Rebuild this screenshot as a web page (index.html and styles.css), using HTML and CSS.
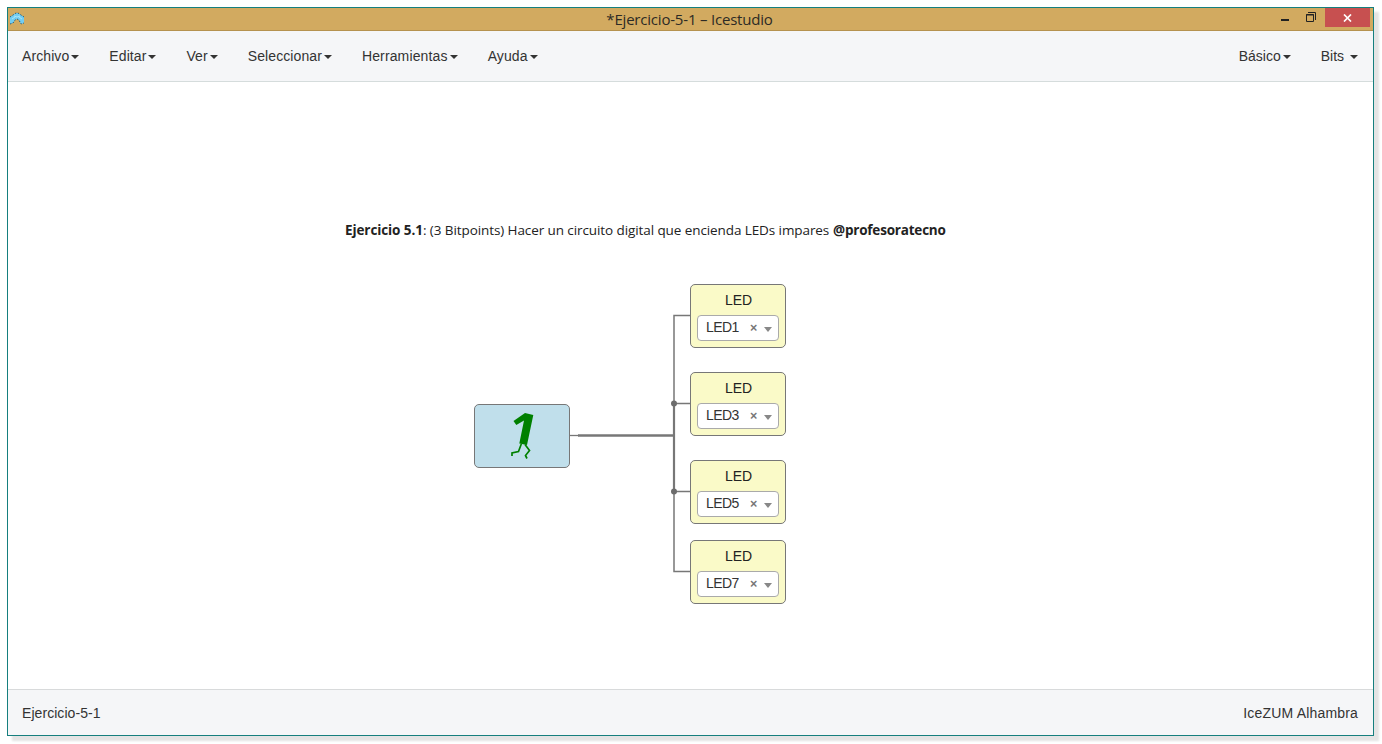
FILE: index.html
```html
<!DOCTYPE html>
<html lang="es">
<head>
<meta charset="utf-8">
<title>Ejercicio-5-1 – Icestudio</title>
<link rel="stylesheet" href="styles.css">
</head>
<body>
<div class="window">
  <header class="titlebar">
    <svg class="app-icon" width="16" height="14" viewBox="0 0 16 14"><path d="M1 5L4 3L7 1H9L15 5V11L12 12L10 8L8 7L6 8L4 11L1 12Z" fill="#72cdf2"/><path d="M1 5L4 3L7 1H9L12 3L15 5M1 12L4 11L6 8L8 7L10 8L12 12L15 11" fill="none" stroke="#256080" stroke-dasharray="1.500 1.500"/><path d="M5 4l3 1 3-1M3 7l3-2M10 5l3 2" fill="none" stroke="#a6e5fb"/></svg>
    <h1 class="title"><span>*Ejercicio-5-1 – Icestudio</span></h1>
    <div class="controls">
      <svg width="50" height="19" viewBox="0 0 50 19"><path d="M6 11h8v2H6z" fill="#222"/><path d="M31.500 6.500h7v7h-7zM31 7h8M33 4.500h7.500V12" fill="none" stroke="#222"/></svg>
      <div class="close"><svg width="9" height="8" viewBox="0 0 9 8"><path d="M1 .5l7 7M8 .5l-7 7" stroke="#fff" stroke-width="1.7"/></svg></div>
    </div>
  </header>
  <nav class="navbar">
    <div class="menu main-menu">
      <a>Archivo<i class="caret"></i></a><a>Editar<i class="caret"></i></a><a>Ver<i class="caret"></i></a><a>Seleccionar<i class="caret"></i></a><a class="wide">Herramientas<i class="caret"></i></a><a>Ayuda<i class="caret"></i></a>
    </div>
    <div class="menu">
      <a>Básico<i class="caret"></i></a><a>Bits <i class="caret"></i></a>
    </div>
  </nav>
  <main class="canvas">
    <p class="note"><b class="note-name">Ejercicio 5.1</b><span class="note-text">: (3 Bitpoints) Hacer un circuito digital que encienda LEDs impares </span><b class="note-author">@profesoratecno</b></p>
    <svg class="wires" width="1365" height="607" viewBox="0 0 1365 607">
      <g fill="none" stroke="#777">
        <path d="M562 353.500H571" stroke-width="1.3"/>
        <path d="M570 353.500H666" stroke-width="2.500"/>
        <path d="M682 233.500H666V489.500H682M666 321.500H682M666 409.500H682" stroke-width="1.500"/>
        <path d="M666 321.500V409.500" stroke-width="2.200"/>
      </g>
      <g fill="#6c6c6c"><circle cx="666" cy="321.500" r="3"/><circle cx="666" cy="409.500" r="3"/></g>
    </svg>
    <div class="block constant">
      <svg width="94" height="62" viewBox="0 0 94 62"><path d="M50 8L58.300 10L52 40L44.300 38.500L49 15.500L41.300 20L38.500 16Z" fill="#008000"/><path d="M46.300 39L43.500 46.500L37 48V51M50 39.500L54.500 45.500L50.500 50.500L52 53.500" fill="none" stroke="#008000" stroke-width="1.700"/></svg>
    </div>
    <div class="block led led-1"><span class="label">LED</span><div class="select"><span class="value">LED1</span><span class="clear">×</span><i class="arrow"></i></div></div>
    <div class="block led led-3"><span class="label">LED</span><div class="select"><span class="value">LED3</span><span class="clear">×</span><i class="arrow"></i></div></div>
    <div class="block led led-5"><span class="label">LED</span><div class="select"><span class="value">LED5</span><span class="clear">×</span><i class="arrow"></i></div></div>
    <div class="block led led-7"><span class="label">LED</span><div class="select"><span class="value">LED7</span><span class="clear">×</span><i class="arrow"></i></div></div>
  </main>
  <footer class="footer"><span class="project">Ejercicio-5-1</span><span class="board">IceZUM Alhambra</span></footer>
</div>
</body>
</html>
```

FILE: styles.css
```css
* { box-sizing: border-box; }
body {
  margin: 0;
  padding: 7px 0 0 7px;
  height: 744px;
  overflow: hidden;
  background: #fff;
  font: 14px/20px "Liberation Sans", Arial, sans-serif;
  color: #333;
}
.window {
  display: flex;
  flex-direction: column;
  width: 1367px;
  height: 729px;
  border: 1px solid #157f7e;
  box-shadow: 5px 5px 2px #e4e4e4;
  background: #fff;
}
.titlebar {
  display: grid;
  grid-template-columns: 100px 1fr 100px;
  height: 23px;
  background: #d2aa60;
  border-bottom: 1px solid #b5924f;
}
.app-icon { margin: 4px 0 0 1px; }
.title {
  margin: 0;
  padding-right: 2px;
  font: 15px/23px "Open Sans", "Noto Sans", sans-serif;
  letter-spacing: -0.2px;
  text-align: center;
  color: #2d2a25;
}
.controls { display: flex; justify-content: flex-end; padding-right: 3px; }
.close {
  display: flex;
  align-items: center;
  justify-content: center;
  width: 45px;
  height: 19px;
  background: #c75050;
}
.navbar {
  display: flex;
  justify-content: space-between;
  height: 51px;
  padding: 15px 15px 0 14px;
  background: #f5f6f8;
  border-bottom: 1px solid #d5dcdc;
}
.menu { display: flex; gap: 30px; white-space: pre; }
.main-menu { letter-spacing: 0.09px; }
.main-menu .wide { letter-spacing: 0.14px; }
.caret {
  display: inline-block;
  margin-left: 2px;
  vertical-align: middle;
  border-top: 4px solid #333;
  border-left: 4px solid transparent;
  border-right: 4px solid transparent;
}
.canvas { position: relative; flex: 1; }
.note {
  position: absolute;
  left: 337px;
  top: 138px;
  margin: 0;
  white-space: pre;
  font: 13.5px/20px "Open Sans", "Noto Sans", sans-serif;
  color: #222;
}
.note span, .note b { display: inline-block; }
.note-name { width: 78px; letter-spacing: -0.1px; }
.note-text { width: 410px; letter-spacing: -0.09px; }
.note-author { letter-spacing: -0.2px; }
.wires { position: absolute; left: 0; top: 0; }
.block {
  position: absolute;
  width: 96px;
  height: 64px;
  border: 1px solid #777;
  border-radius: 5px;
}
.constant { left: 466px; top: 322px; background: #c0dfeb; }
.led {
  left: 682px;
  display: flex;
  flex-direction: column;
  align-items: center;
  padding-top: 5px;
  background: #fafac8;
}
.led-1 { top: 202px; }
.led-3 { top: 290px; }
.led-5 { top: 378px; }
.led-7 { top: 458px; }
.label { padding-left: 1px; color: #222; }
.select {
  display: flex;
  align-items: center;
  width: 82px;
  height: 26px;
  margin-top: 5px;
  padding: 0 6px 1px 8px;
  border: 1px solid #aaa;
  border-radius: 4px;
  background: #fff;
}
.value { width: 44px; padding-bottom: 1px; font-size: 14px; letter-spacing: -0.6px; }
.clear { width: 14px; font-size: 12.5px; font-weight: bold; color: #777; }
.arrow {
  margin-top: 3px;
  border-top: 5px solid #888;
  border-left: 4px solid transparent;
  border-right: 4px solid transparent;
}
.footer {
  display: flex;
  justify-content: space-between;
  height: 46px;
  padding: 13px 15px 0 14px;
  background: #f5f6f8;
  border-top: 1px solid #d8dadb;
}
.project { letter-spacing: 0.06px; }
.board { letter-spacing: 0.18px; }
```
